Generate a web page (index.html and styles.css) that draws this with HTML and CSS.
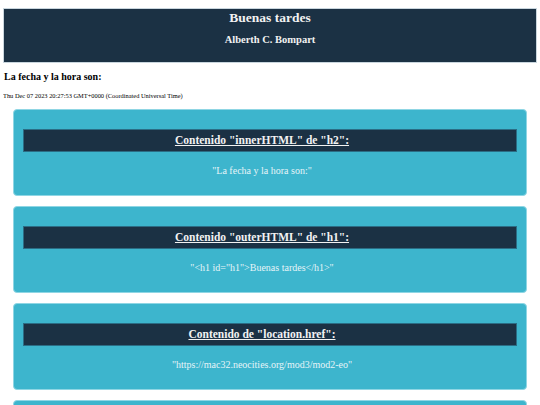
FILE: index.html
```html
<!DOCTYPE html>
<html lang="es">
<head>
    <meta charset="UTF-8">
    <meta name="viewport" content="width=device-width, initial-scale=1.0">
    <title>Buenas tardes</title>
    <link rel="stylesheet" href="styles.css">
</head>
<body>

    <!-- Cabecera -->
    <header class="header">
        <h1 id="h1">Buenas tardes</h1>
        <h3>Alberth C. Bompart</h3>
    </header>

    <!-- Fecha -->
    <h2 id="h2" class="fecha-titulo">La fecha y la hora son:</h2>
    <p class="fecha">Thu Dec 07 2023 20:27:53 GMT+0000 (Coordinated Universal Time)</p>

    <!-- Tarjetas -->
    <div class="card">
        <div class="card-title"><u>Contenido "innerHTML" de "h2":</u></div>
        <p class="card-text">"La fecha y la hora son:"</p>
    </div>

    <div class="card">
        <div class="card-title"><u>Contenido "outerHTML" de "h1":</u></div>
        <p class="card-text">"&lt;h1 id="h1"&gt;Buenas tardes&lt;/h1&gt;"</p>
    </div>

    <div class="card">
        <div class="card-title"><u>Contenido de "location.href":</u></div>
        <p class="card-text">"https://mac32.neocities.org/mod3/mod2-eo"</p>
    </div>

    <div class="card"></div>

</body>
</html>
```

FILE: styles.css
```css
/* General */
body {
    font-family: 'Liberation Serif', 'Times New Roman', serif;
    background-color: #ffffff;
    color: #000;
    margin: 8px 3px;
}

/* Cabecera */
.header {
    background-color: #1b3144;
    border: 1px solid #c9d6de;
    color: #f2f2f2;
    text-align: center;
    padding: 0 0 17px;
}

.header h1 {
    font-size: 13.5px;
    margin: 0 0 8px;
    padding-top: 1px;
}

.header h3 {
    font-size: 10.5px;
    margin: 0;
}

/* Fecha */
.fecha-titulo {
    font-size: 10px;
    margin: 8px 0 0 1px;
}

.fecha {
    font-size: 6.4px;
    margin: 10px 0 0;
}

/* Tarjetas */
.card {
    background-color: #3db5cd;
    border: 1px solid #8fd6e4;
    border-radius: 4px;
    margin: 10px 10px 0;
    padding: 19px 9px 19px;
    min-height: 20px;
}

.card-title {
    background-color: #1b3144;
    border: 1px solid #2b6d85;
    color: #f2f2f2;
    font-size: 11.5px;
    font-weight: bold;
    text-align: center;
    height: 21px;
    line-height: 21px;
    padding-right: 16px;
}

.card-title u {
    text-underline-offset: 1px;
}

.card-text {
    color: #e6f4f8;
    font-size: 10px;
    text-align: center;
    margin: 13px 0 0;
    padding-right: 16px;
}
```
